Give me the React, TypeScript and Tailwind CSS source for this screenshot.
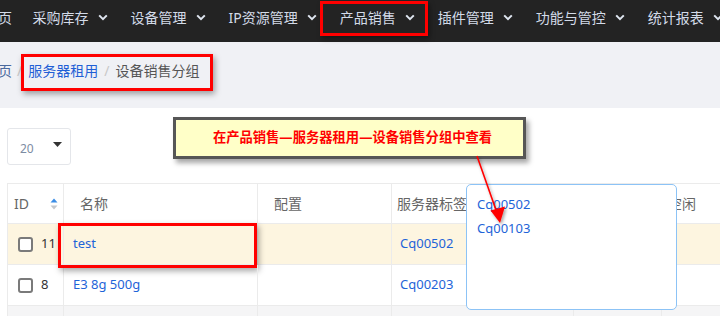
import React from 'react';

const font = { fontFamily: '"Noto Sans", "Noto Sans CJK SC", sans-serif' };

function Chevron() {
  return (
    <svg width="10" height="7" viewBox="0 0 10 7" className="shrink-0">
      <path d="M1.2 1.4L5 5.2 8.8 1.4" fill="none" stroke="#dfe6f0" strokeWidth="2" />
    </svg>
  );
}

const navItems = ['采购库存', '设备管理', 'IP资源管理', '产品销售', '插件管理', '功能与管控', '统计报表'];

function NavBar() {
  return (
    <div className="h-[42px] bg-[#232323] flex items-start text-[14px] text-[#d3dbe8] whitespace-nowrap">
      <div className="flex items-center h-[35px] -ml-[16px]">
        <div className="pr-[9px]">首页</div>
        {navItems.map((t) => (
          <div key={t} className="relative flex items-center gap-[9px] px-[11.5px] h-full">
            <span>{t}</span>
            <Chevron />
            {t === '产品销售' && (
              <span className="absolute -left-[8px] -right-[2px] top-[1px] -bottom-[1px] border-[3px] border-[#ff0000] shadow-[2px_3px_5px_rgba(0,0,0,0.35)]" />
            )}
          </div>
        ))}
      </div>
    </div>
  );
}

function Breadcrumb() {
  return (
    <div className="h-[66px] bg-[#f0f1f5] pt-[12px] text-[14px] whitespace-nowrap">
      <div className="flex items-start -ml-[16px]">
        <span className="pt-[6px] text-[#4b6a9e]">首页</span>
        <span className="pt-[6px] ml-[5px] -mr-[1px] text-[#c8c8c8]">/</span>
        <span className="flex items-center h-[37px] border-[3px] border-[#ff0000] pl-[4px] pr-[11px] pb-[4px] shadow-[2px_3px_6px_rgba(0,0,0,0.35)]">
          <span className="text-[#1f5fd6]">服务器租用</span>
          <span className="mx-[6px] text-[#c8c8c8]">/</span>
          <span className="text-[#555]">设备销售分组</span>
        </span>
      </div>
    </div>
  );
}

function SortIcon() {
  return (
    <svg width="8" height="12" viewBox="0 0 8 12" className="shrink-0">
      <path d="M4 0.5L7.5 4.5H0.5Z" fill="#3b8de6" />
      <path d="M4 11.5L7.5 7.5H0.5Z" fill="#c4c7cc" />
    </svg>
  );
}

function Checkbox() {
  return <span className="w-[15px] h-[15px] border-2 border-[#7a7a7a] rounded-[3px] bg-white shrink-0" />;
}

const rows = [
  { id: '11', name: 'test', tag: 'Cq00502', bg: 'bg-[#fdf5e0]', mark: true },
  { id: '8', name: 'E3 8g 500g', tag: 'Cq00203', bg: 'bg-white', mark: false },
];

function Table() {
  return (
    <div className="ml-[7px] mt-[18px] w-[800px] border-t border-l border-[#ebebeb] text-[13px]">
      <div className="flex h-[40px] text-[14px] text-[#666]">
        <div className="w-[56px] flex items-center justify-between pl-[6px] pr-[5px] border-r border-b border-[#ebebeb]">
          <span>ID</span>
          <SortIcon />
        </div>
        <div className="w-[194px] flex items-center pl-[16px] border-r border-b border-[#ebebeb]">名称</div>
        <div className="w-[134px] flex items-center pl-[16px] border-r border-b border-[#ebebeb]">配置</div>
        <div className="w-[182px] flex items-center pl-[5px] border-r border-b border-[#ebebeb]">服务器标签</div>
        <div className="w-[88px] flex items-center pl-[6px] border-r border-b border-[#ebebeb]">分组</div>
        <div className="w-[140px] flex items-center pl-[6px] border-r border-b border-[#ebebeb]">空闲</div>
      </div>
      {rows.map((r) => (
        <div key={r.id} className={`flex h-[41px] ${r.bg}`}>
          <div className="w-[56px] flex items-center pl-[10px] gap-[8px] border-r border-b border-[#ebebeb] text-[#333]">
            <Checkbox />
            <span>{r.id}</span>
          </div>
          <div className="relative w-[194px] flex items-center pl-[9px] border-r border-b border-[#ebebeb] text-[#1e64d8]">
            {r.name}
            {r.mark && (
              <span className="absolute -left-[6px] right-0 -top-[1px] -bottom-[4px] border-[3px] border-[#ff0000] shadow-[2px_3px_6px_rgba(0,0,0,0.35)]" />
            )}
          </div>
          <div className="w-[134px] border-r border-b border-[#ebebeb]" />
          <div className="w-[182px] flex items-center pl-[8px] border-r border-b border-[#ebebeb] text-[#1e64d8]">{r.tag}</div>
          <div className="w-[88px] border-r border-b border-[#ebebeb]" />
          <div className="w-[140px] border-r border-b border-[#ebebeb]" />
        </div>
      ))}
      <div className="flex h-[41px] bg-[#f5f5f6]">
        <div className="w-[56px] border-r border-[#ebebeb]" />
        <div className="w-[194px] border-r border-[#ebebeb]" />
        <div className="w-[134px] border-r border-[#ebebeb]" />
        <div className="w-[182px] border-r border-[#ebebeb]" />
        <div className="w-[88px] border-r border-[#ebebeb]" />
        <div className="w-[140px] border-r border-[#ebebeb]" />
      </div>
    </div>
  );
}

export default function App() {
  return (
    <div className="relative w-[720px] h-[316px] overflow-hidden bg-white" style={font}>
      <NavBar />
      <Breadcrumb />
      <div className="bg-white">
        <div className="flex items-start h-[57px]">
          <div className="ml-[7px] mt-[20px] w-[64px] h-[37px] border border-[#e4e6ea] rounded-[3px] flex items-center justify-between pl-[12px] pr-[8px]">
            <span className="text-[12px] text-[#7d8ca3] pt-[4px]">20</span>
            <svg width="9" height="5" viewBox="0 0 9 5" className="-mt-[4px]">
              <path d="M0 0H9L4.5 5Z" fill="#333" />
            </svg>
          </div>
          <div className="ml-[102px] mt-[9px] w-[353px] h-[42px] border-[3px] border-[#565656] bg-[#ffffc8] shadow-[3px_4px_5px_rgba(0,0,0,0.35)] flex items-center justify-center pl-[6px] text-[13.3px] font-bold text-[#ff0000] whitespace-nowrap">
            在产品销售—服务器租用—设备销售分组中查看
          </div>
        </div>
        <Table />
      </div>

      <div className="absolute left-[466px] top-[184px] w-[211px] h-[126px] border-[1.5px] border-[#8cc3f6] rounded-[5px] bg-white pt-[8px] pl-[10px] text-[13px] text-[#1e64d8]">
        <div className="h-[24px] flex items-center">Cq00502</div>
        <div className="h-[24px] flex items-center">Cq00103</div>
      </div>

      <svg className="absolute inset-0 pointer-events-none" width="720" height="316">
        <defs>
          <filter id="sh" x="-50%" y="-50%" width="200%" height="200%">
            <feDropShadow dx="1.5" dy="2" stdDeviation="1.5" floodColor="#000" floodOpacity="0.35" />
          </filter>
        </defs>
        <g filter="url(#sh)">
          <line x1="477" y1="156" x2="496" y2="210" stroke="#ff0000" strokeWidth="1.6" />
          <path d="M500 223L490.5 210.5L505 206.5Z" fill="#ff0000" />
        </g>
      </svg>
    </div>
  );
}
